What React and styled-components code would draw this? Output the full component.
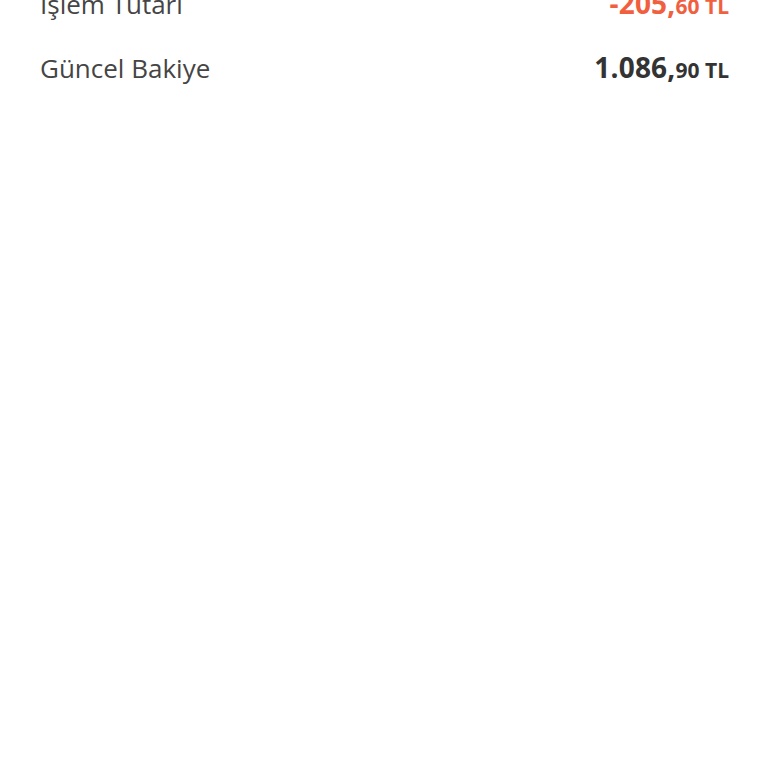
import React from 'react';
import styled, { createGlobalStyle } from 'styled-components';

const GlobalStyle = createGlobalStyle`
  body {
    margin: 0;
    background: #ffffff;
    font-family: "Open Sans", "Noto Sans", sans-serif;
  }
`;

const Page = styled.div`
  width: 768px;
  height: 768px;
  overflow: hidden;
  background: #ffffff;
`;

const List = styled.div`
  display: flex;
  flex-direction: column;
  padding: 0 39px 0 40px;
  margin-top: -29px;
`;

const Row = styled.div`
  display: flex;
  align-items: baseline;
  justify-content: space-between;
  height: 64px;
  line-height: 64px;
`;

const Label = styled.span`
  font-size: 26px;
  font-weight: 400;
  color: #454545;
`;

const Amount = styled.span`
  font-weight: 700;
  color: ${(p) => (p.negative ? '#f0603f' : '#333333')};
  font-size: 28px;
  letter-spacing: 0.2px;
`;

const Cents = styled.span`
  font-size: 21px;
  letter-spacing: 0;
`;

const rows = [
  { label: 'İşlem Tutarı', whole: '-205,', cents: '60 TL', negative: true },
  { label: 'Güncel Bakiye', whole: '1.086,', cents: '90 TL', negative: false },
];

function App() {
  return (
    <Page>
      <GlobalStyle />
      <List>
        {rows.map((row) => (
          <Row key={row.label}>
            <Label>{row.label}</Label>
            <Amount negative={row.negative}>
              {row.whole}
              <Cents>{row.cents}</Cents>
            </Amount>
          </Row>
        ))}
      </List>
    </Page>
  );
}

export default App;
